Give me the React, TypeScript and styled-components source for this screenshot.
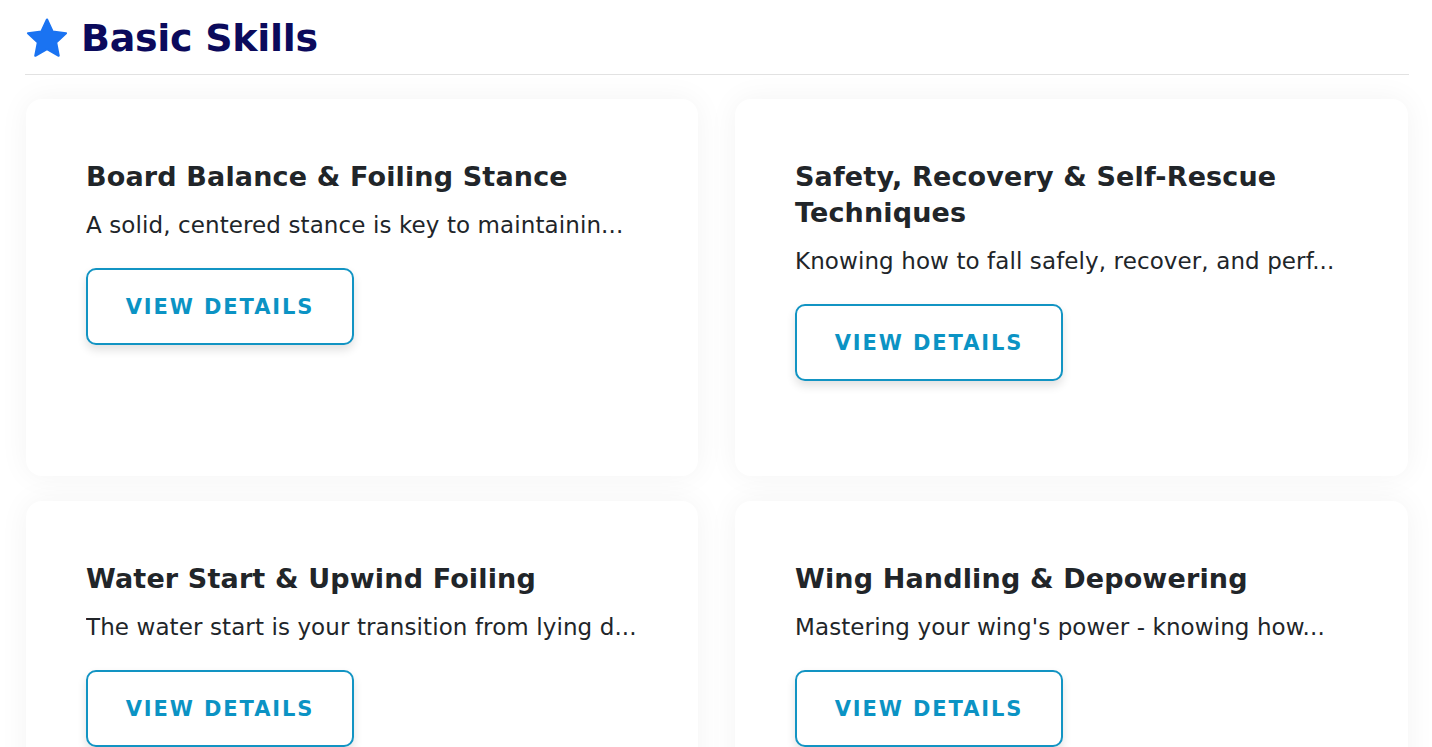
import React from "react";
import styled, { createGlobalStyle } from "styled-components";

const Global = createGlobalStyle`
  * { box-sizing: border-box; }
  html, body { margin: 0; padding: 0; background: #ffffff; }
  body { font-family: "DejaVu Sans", "Noto Sans", sans-serif; overflow: hidden; }
`;

const Page = styled.div`
  padding: 14px 24px 0 24px;
  width: 1432px;
`;

const Header = styled.div`
  display: flex;
  align-items: center;
  gap: 12px;
  height: 47px;
  border-bottom: 1px solid #e2e2e2;
  padding-bottom: 13px;
  box-sizing: content-box;
  width: 1384px;
  margin-left: 1px;
`;

const Heading = styled.h2`
  margin: 0;
  font-size: 38px;
  font-weight: 800;
  color: #0b0a5c;
  letter-spacing: -0.3px;
`;

const Grid = styled.div`
  display: grid;
  grid-template-columns: 672px 673px;
  column-gap: 37px;
  row-gap: 25px;
  margin-top: 24px;
  margin-left: 2px;
`;

const Card = styled.div`
  background: #fff;
  border-radius: 16px;
  box-shadow: 0 0 30px rgba(0, 0, 0, 0.05);
  padding: 60px 60px 0 60px;
  min-height: 377px;
  display: flex;
  flex-direction: column;
  align-items: flex-start;
`;

const Title = styled.h3`
  margin: 0;
  font-size: 27px;
  line-height: 36px;
  font-weight: 700;
  color: #212529;
  letter-spacing: 0.15px;
`;

const Desc = styled.p`
  margin: 15px 0 0 0;
  width: 100%;
  font-size: 23px;
  line-height: 30px;
  color: #212529;
  letter-spacing: 0.1px;
  white-space: nowrap;
  overflow: hidden;
  text-overflow: ellipsis;
`;

const Button = styled.button`
  margin-top: 28px;
  width: 268px;
  height: 77px;
  background: #fff;
  border: 2.5px solid #1294c3;
  border-radius: 10px;
  color: #0b93c4;
  font-family: inherit;
  font-size: 21px;
  font-weight: 700;
  letter-spacing: 1.9px;
  text-transform: uppercase;
  box-shadow: 0 5px 10px rgba(0, 0, 0, 0.12);
  cursor: pointer;
`;

const Star = () => (
  <svg width="44" height="42" viewBox="0 0 24 23" aria-hidden="true">
    <path
      d="M12 1.4l3.1 6.6 7.3.9-5.4 5 1.4 7.3L12 17.6 5.6 21.2 7 13.9l-5.4-5 7.3-.9z"
      fill="#1a73f2"
      stroke="#1a73f2"
      strokeWidth="1.2"
      strokeLinejoin="round"
    />
  </svg>
);

const skills = [
  { title: "Board Balance & Foiling Stance", desc: "A solid, centered stance is key to maintainin..." },
  { title: "Safety, Recovery & Self-Rescue Techniques", desc: "Knowing how to fall safely, recover, and perf..." },
  { title: "Water Start & Upwind Foiling", desc: "The water start is your transition from lying d..." },
  { title: "Wing Handling & Depowering", desc: "Mastering your wing's power - knowing how..." },
];

export default function App() {
  return (
    <>
      <Global />
      <Page>
        <Header>
          <Star />
          <Heading>Basic Skills</Heading>
        </Header>
        <Grid>
          {skills.map((s) => (
            <Card key={s.title}>
              <Title>{s.title}</Title>
              <Desc>{s.desc}</Desc>
              <Button>View Details</Button>
            </Card>
          ))}
        </Grid>
      </Page>
    </>
  );
}
